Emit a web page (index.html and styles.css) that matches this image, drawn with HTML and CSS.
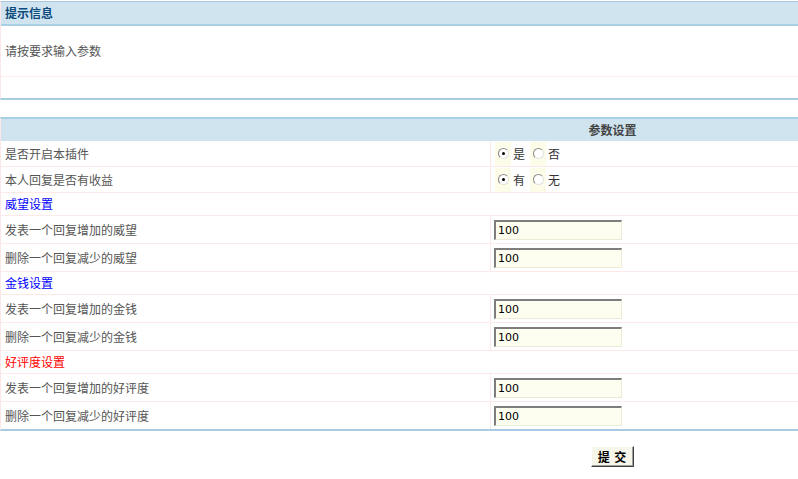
FILE: index.html
```html
<!DOCTYPE html>
<html lang="zh-CN">
<head>
<meta charset="utf-8">
<title>参数设置</title>
<link rel="stylesheet" href="styles.css">
</head>
<body>
<div class="panel info">
  <div class="title">提示信息</div>
  <div class="msg">请按要求输入参数</div>
  <div class="blank"></div>
</div>

<div class="panel settings">
  <div class="head"><div class="hlbl"></div><div class="hval">参数设置</div></div>

  <div class="row r26"><div class="lbl">是否开启本插件</div><div class="val">
    <span class="rbox"><span class="radio on"></span></span><span class="rtxt">是</span>
    <span class="rbox"><span class="radio"></span></span><span class="rtxt">否</span>
  </div></div>
  <div class="row r26"><div class="lbl">本人回复是否有收益</div><div class="val">
    <span class="rbox"><span class="radio on"></span></span><span class="rtxt">有</span>
    <span class="rbox"><span class="radio"></span></span><span class="rtxt">无</span>
  </div></div>

  <div class="sec blue">威望设置</div>
  <div class="row r28"><div class="lbl">发表一个回复增加的威望</div><div class="val"><input class="txt" type="text" value="100"></div></div>
  <div class="row r28"><div class="lbl">删除一个回复减少的威望</div><div class="val"><input class="txt" type="text" value="100"></div></div>

  <div class="sec blue">金钱设置</div>
  <div class="row r28"><div class="lbl">发表一个回复增加的金钱</div><div class="val"><input class="txt" type="text" value="100"></div></div>
  <div class="row r28"><div class="lbl">删除一个回复减少的金钱</div><div class="val"><input class="txt" type="text" value="100"></div></div>

  <div class="sec red">好评度设置</div>
  <div class="row r28"><div class="lbl">发表一个回复增加的好评度</div><div class="val"><input class="txt" type="text" value="100"></div></div>
  <div class="row r28 last"><div class="lbl">删除一个回复减少的好评度</div><div class="val"><input class="txt" type="text" value="100"></div></div>
</div>

<div class="actions"><button class="btn" type="submit">提 交</button></div>
</body>
</html>
```

FILE: styles.css
```css
html, body {
  margin: 0;
  padding: 0;
  background: #fff;
}
body {
  padding-top: 1px;
  font-family: "Noto Sans CJK SC", "Liberation Sans", sans-serif;
  font-size: 12px;
  color: #555;
  width: 798px;
}
.panel {
  border-left: 1px solid #fbe7e7;
  box-sizing: border-box;
  width: 798px;
}
.info {
  border-top: 1px solid #a9c6dc;
  border-bottom: 2px solid #a7cbe1;
}
.title {
  height: 22px;
  line-height: 22px;
  background: #d0e4f0;
  border-bottom: 2px solid #a9cfe4;
  padding-left: 4px;
  font-weight: bold;
  color: #0c4a7b;
}
.msg {
  height: 50px;
  line-height: 50px;
  padding-left: 4px;
  border-bottom: 1px solid #fdeeee;
}
.blank {
  height: 21px;
}
.settings {
  margin-top: 17px;
  border-top: 2px solid #a9cfe4;
  border-bottom: 2px solid #a7cbe1;
}
.head {
  display: flex;
  height: 22px;
  line-height: 22px;
  background: #d0e4f0;
}
.hlbl { width: 490px; }
.hval {
  flex: 1;
  text-align: center;
  padding-right: 64px;
  font-weight: bold;
  color: #444;
}
.row {
  display: flex;
  border-bottom: 1px solid #fde9e9;
  box-sizing: border-box;
}
.row.last { border-bottom: none; }
.r26 { height: 26px; }
.r28 { height: 28px; }
.row.last.r28 { height: 27px; }
.lbl {
  width: 490px;
  box-sizing: border-box;
  padding-left: 4px;
  display: flex;
  align-items: center;
  border-right: 1px solid #fde9e9;
}
.val {
  flex: 1;
  display: flex;
  align-items: center;
  padding-left: 3px;
}
.sec {
  height: 23px;
  line-height: 22px;
  box-sizing: border-box;
  padding-left: 4px;
  border-bottom: 1px solid #fde9e9;
}
.blue { color: #0000ff; }
.red { color: #ff0000; }

.rbox {
  width: 16px;
  height: 24px;
  background: #fcfce8;
  display: flex;
  align-items: center;
  justify-content: center;
}
.rbox:first-child { margin-left: 1px; }
.radio {
  width: 9px;
  height: 9px;
  border-radius: 50%;
  background: #fff;
  border: 1px solid;
  border-color: #8a8a8a #e2e2e2 #e2e2e2 #8a8a8a;
  position: relative;
}
.radio.on::after {
  content: "";
  position: absolute;
  left: 3px;
  top: 3px;
  width: 3px;
  height: 3px;
  border-radius: 50%;
  background: #000;
}
.rtxt {
  margin-left: 2px;
  margin-right: 5px;
  color: #333;
}
.txt {
  width: 128px;
  height: 20px;
  box-sizing: border-box;
  margin: 0;
  padding: 0 0 0 2px;
  background: #fefef0;
  border: 1px solid #ebebd6;
  border-top: 2px solid #7d7d7d;
  border-left: 2px solid #7d7d7d;
  font-family: "DejaVu Sans", "Liberation Sans", sans-serif;
  font-size: 11px;
  color: #000;
}
.actions {
  width: 245px;
  margin-left: 490px;
  margin-top: 15px;
  display: flex;
  justify-content: center;
}
.btn {
  width: 43px;
  height: 21px;
  box-sizing: border-box;
  padding: 0;
  background: #f6f6ea;
  border: 1px solid;
  border-color: #fefefe #404040 #404040 #fefefe;
  box-shadow: inset -1px -1px 0 #a0a0a0;
  font-family: "Noto Sans CJK SC", sans-serif;
  font-size: 12px;
  font-weight: bold;
  color: #000;
  letter-spacing: 1px;
}
```
